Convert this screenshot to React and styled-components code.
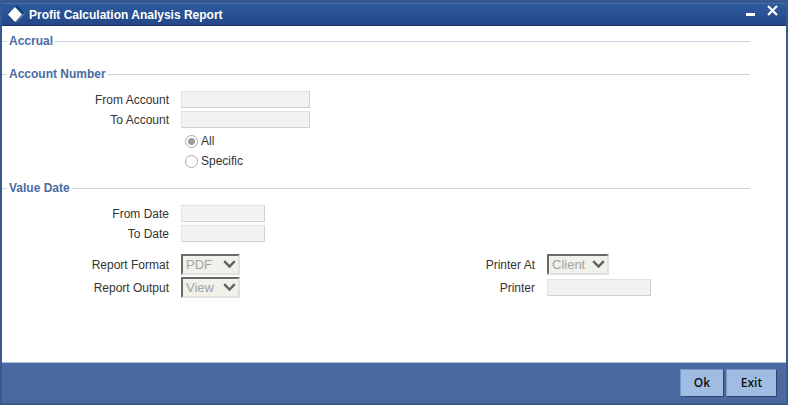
import React, { useState } from "react";
import styled, { createGlobalStyle } from "styled-components";

function Select({ id, value, width }) {
  return (
    <SelectBox $width={width}>
      <select id={id} defaultValue={value} disabled>
        <option>{value}</option>
      </select>
      <svg width="13" height="9" viewBox="0 0 13 9" aria-hidden="true">
        <path
          d="M1.2 1.2 L6.5 6.5 L11.8 1.2"
          fill="none"
          stroke="#606060"
          strokeWidth="2.4"
        />
      </svg>
    </SelectBox>
  );
}

function App() {
  const [range, setRange] = useState("all");

  return (
    <Window>
      <GlobalStyle />
      <TitleBar>
        <svg width="18" height="18" viewBox="0 0 18 18" aria-hidden="true">
          <path d="M8 0 L11 0 L18 8 L10 16 L8 16 L14 8.5 L6 2 Z" fill="#0d4478" />
          <path d="M17.5 7.5 L9.5 16" fill="none" stroke="#7fa8d0" />
          <path d="M8 1 L15 8.5 L8 16 L1 8.5 Z" fill="#fff" />
        </svg>
        <h1>Profit Calculation Analysis Report</h1>
        <TitleButton type="button" aria-label="Minimize">
          <svg width="9" height="12" viewBox="0 0 9 12">
            <rect y="8" width="9" height="3" fill="#fff" />
          </svg>
        </TitleButton>
        <TitleButton type="button" aria-label="Close">
          <svg width="11" height="12" viewBox="0 0 11 12">
            <path
              d="M1 1 L10 10 M10 1 L1 10"
              stroke="#fff"
              strokeWidth="2.2"
            />
          </svg>
        </TitleButton>
      </TitleBar>

      <Content>
        <Section>
          <SectionTitle>Accrual</SectionTitle>
        </Section>

        <Section>
          <SectionTitle>Account Number</SectionTitle>
          <Fields>
            <Row>
              <label htmlFor="fromAccount">From Account</label>
              <TextInput id="fromAccount" $width={129} disabled />
            </Row>
            <Row>
              <label htmlFor="toAccount">To Account</label>
              <TextInput id="toAccount" $width={129} disabled />
            </Row>
            <RadioRow>
              <input
                id="all"
                type="radio"
                name="range"
                checked={range === "all"}
                onChange={() => setRange("all")}
              />
              <label htmlFor="all">All</label>
            </RadioRow>
            <RadioRow>
              <input
                id="specific"
                type="radio"
                name="range"
                checked={range === "specific"}
                onChange={() => setRange("specific")}
              />
              <label htmlFor="specific">Specific</label>
            </RadioRow>
          </Fields>
        </Section>

        <Section>
          <SectionTitle>Value Date</SectionTitle>
          <Fields>
            <Row>
              <label htmlFor="fromDate">From Date</label>
              <TextInput id="fromDate" $width={84} disabled />
            </Row>
            <Row>
              <label htmlFor="toDate">To Date</label>
              <TextInput id="toDate" $width={84} disabled />
            </Row>
          </Fields>
        </Section>

        <Options>
          <OptionRow>
            <label htmlFor="reportFormat">Report Format</label>
            <Select id="reportFormat" value="PDF" width={59} />
          </OptionRow>
          <OptionRow>
            <label htmlFor="printerAt">Printer At</label>
            <Select id="printerAt" value="Client" width={62} />
          </OptionRow>
          <OptionRow>
            <label htmlFor="reportOutput">Report Output</label>
            <Select id="reportOutput" value="View" width={59} />
          </OptionRow>
          <OptionRow>
            <label htmlFor="printer">Printer</label>
            <TextInput id="printer" $width={104} disabled />
          </OptionRow>
        </Options>
      </Content>

      <Footer>
        <FooterButton type="button" $width={44}>
          Ok
        </FooterButton>
        <FooterButton type="button" $width={51}>
          Exit
        </FooterButton>
      </Footer>
    </Window>
  );
}

const GlobalStyle = createGlobalStyle`
  * {
    box-sizing: border-box;
  }
  body {
    margin: 0;
    color: #333;
    background: #fff;
    font: 12px/16px "Liberation Sans", Arial, sans-serif;
  }
`;

const Window = styled.div`
  display: flex;
  flex-direction: column;
  min-height: 100vh;
  border: 2px solid #38598f;
  border-top-width: 3px;
  background: #fff;
`;

const TitleBar = styled.header`
  display: flex;
  align-items: center;
  height: 23px;
  padding: 0 8px 0 5px;
  border-top: 1px solid #4270ab;
  border-bottom: 1px solid #1b3567;
  background: linear-gradient(#2d5a9e, #244788);

  h1 {
    flex: 1;
    margin: 0 0 0 4px;
    color: #fff;
    font-size: 12px;
    line-height: 16px;
  }
`;

const TitleButton = styled.button`
  display: flex;
  padding: 0;
  margin-left: 12px;
  margin-bottom: 8px;
  border: 0;
  background: none;
  cursor: pointer;
`;

const Content = styled.main`
  flex: 1;
  padding: 7px 36px 7px 0;
`;

const Section = styled.section`
  margin-bottom: 9px;
`;

const SectionTitle = styled.h2`
  display: flex;
  align-items: center;
  gap: 2px;
  margin: 0;
  padding-bottom: 8px;
  color: #4a6ba3;
  font-size: 12px;
  line-height: 16px;

  &::before,
  &::after {
    content: "";
    width: 5px;
    height: 1px;
    background: #c9d5e2;
  }
  &::after {
    flex: 1;
  }
`;

const Fields = styled.div`
  display: flex;
  flex-direction: column;
  padding-top: 1px;
`;

const Row = styled.div`
  display: grid;
  grid-template-columns: 167px 1fr;
  column-gap: 12px;
  align-items: start;
  height: 20px;

  > label {
    line-height: 18px;
    text-align: right;
  }
`;

const OptionRow = styled(Row)`
  align-items: center;
  height: 21px;
`;

const RadioRow = styled.div`
  display: flex;
  align-items: center;
  gap: 3px;
  height: 20px;
  padding-left: 183px;

  input {
    appearance: none;
    width: 13px;
    height: 13px;
    margin: 0;
    border: 1px solid #a9a9a9;
    border-radius: 50%;
    background: #fff;
  }
  input:checked {
    background: radial-gradient(circle, #9b9b9b 3px, #fff 4px);
  }
`;

const TextInput = styled.input`
  width: ${(props) => props.$width}px;
  height: 17px;
  padding: 0 2px;
  border: 1px solid #e2e2e2;
  border-right-color: #d0d0d0;
  border-bottom-color: #d0d0d0;
  background: #f2f2f2;
  font: inherit;
`;

const Options = styled.div`
  display: grid;
  grid-template-columns: 1fr 1fr;
  row-gap: 2px;
  padding-right: 16px;
`;

const SelectBox = styled.div`
  position: relative;
  width: ${(props) => props.$width}px;
  height: 21px;

  select {
    appearance: none;
    display: block;
    width: 100%;
    height: 100%;
    padding: 0 0 0 3px;
    border: 2px solid #6d696a;
    border-right-color: #e3e1dc;
    border-bottom-color: #e3e1dc;
    border-radius: 0;
    color: #a3a3a0;
    background: #f1f0ea;
    font: inherit;
    font-size: 13px;
    opacity: 1;
  }
  svg {
    position: absolute;
    top: 6px;
    right: 4px;
    pointer-events: none;
  }
`;

const Footer = styled.footer`
  display: flex;
  justify-content: flex-end;
  gap: 2px;
  padding: 6px 9px;
  border-top: 1px solid #a9bcdc;
  background: #4a69a1;
`;

const FooterButton = styled.button`
  width: ${(props) => props.$width}px;
  height: 28px;
  padding: 0;
  border: 1px solid #7496c9;
  border-right-color: #2c4670;
  border-bottom-color: #2c4670;
  color: #111;
  background: #a0bce2;
  font: 600 12px/16px "Open Sans", sans-serif;
  cursor: pointer;
`;

export default App;
